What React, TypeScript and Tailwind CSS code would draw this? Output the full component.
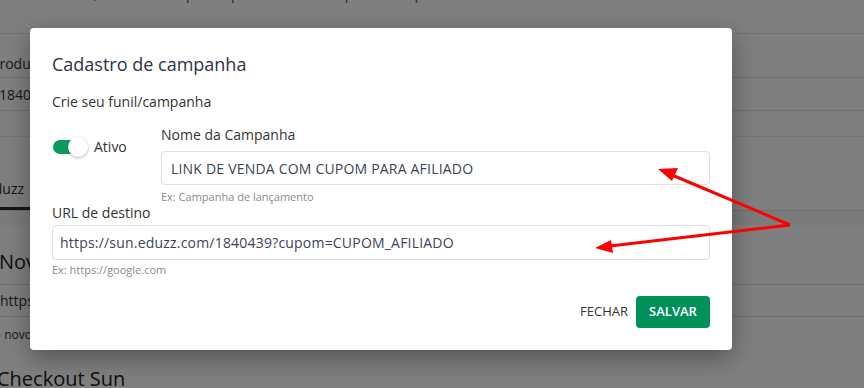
import React from "react";

export default function App() {
  return (
    <div
      className="relative w-[864px] h-[388px] overflow-hidden bg-white text-[#333]"
      style={{ fontFamily: '"Open Sans", "Noto Sans", sans-serif' }}
    >
      {/* background page */}
      <div className="flex flex-col">
        <div className="h-[49px] -mt-[16px] pl-[0px] text-[14px] leading-[20px] text-[#444] whitespace-nowrap">
          e do Checkout, vamos à campanha para vender este produto aqui.
        </div>
        <div className="h-[16px] border-t border-[#e2e2e2]"></div>
        <div className="h-[29px] border-b border-[#ddd] flex items-center -ml-[9px] text-[14px]">Produto</div>
        <div className="h-[33px] border-b border-[#ddd] flex items-center -ml-[1px] text-[14px]">1840439</div>
        <div className="h-[26px] border-b border-[#eaeaea]"></div>
        <div className="h-[74px] flex items-end border-b border-[#ddd]">
          <div className="w-[50px] -ml-[20px] pb-[8px] text-[14px] border-b-[3px] border-[#222a3a] text-center">Eduzz</div>
        </div>
        <div className="h-[14px] bg-[#f6f6f6]"></div>
        <div className="h-[60px] flex items-center pt-[14px] -ml-[1px] text-[20px] text-[#222] border-b border-[#ddd]">Novo link</div>
        <div className="h-[32px] flex items-center text-[14px] border-b border-[#ddd]">https://sun.eduzz.com</div>
        <div className="h-[36px] flex items-center -ml-[6px] text-[12px] text-[#333]">
          <span className="text-[#1a4dcc] mr-[3px]">●</span>novo
        </div>
        <div className="h-[41px] flex items-end -ml-[3px] text-[20px] text-[#222]">Checkout Sun</div>
      </div>

      {/* overlay */}
      <div className="absolute inset-0 bg-black/50"></div>

      {/* modal */}
      <div className="absolute left-[30px] top-[28px] w-[702px] h-[322px] bg-white rounded-[4px] shadow-[0_8px_24px_rgba(0,0,0,0.35)] px-[22px] pt-[24px] flex flex-col">
        <div className="text-[18px] leading-[24px] text-[#2b3445]">Cadastro de campanha</div>
        <div className="mt-[16px] text-[14px] leading-[20px] text-[#333]">Crie seu funil/campanha</div>
        <div className="mt-[13px] flex">
          <div className="w-[109px] flex items-center gap-[6px] pt-[11px] self-start">
            <div className="relative w-[36px] h-[20px] flex items-center">
              <div className="ml-[1px] w-[33px] h-[14px] rounded-full bg-[#0b9a5c]"></div>
              <div className="absolute left-[16px] top-0 w-[20px] h-[20px] rounded-full bg-white shadow-[0_1px_3px_rgba(0,0,0,0.3)]"></div>
            </div>
            <span className="text-[14px] text-[#333]">Ativo</span>
          </div>
          <div className="flex-1 flex flex-col">
            <div className="text-[14px] leading-[20px] text-[#333]">Nome da Campanha</div>
            <div className="mt-[6px] h-[34px] border border-[#dcdfe6] rounded-[4px] flex items-center px-[9px] text-[14px] tracking-[0.2px] text-[#3c4356]">
              LINK DE VENDA COM CUPOM PARA AFILIADO
            </div>
            <div className="mt-[5px] text-[11px] leading-[14px] text-[#8a8a8a]">Ex: Campanha de lançamento</div>
          </div>
        </div>
        <div className="-mt-[1px] text-[14px] leading-[20px] text-[#333]">URL de destino</div>
        <div className="mt-[2px] h-[35px] border border-[#dcdfe6] rounded-[4px] flex items-center px-[7px] text-[14px] tracking-[0.2px] text-[#3c4356]">
          https://sun.eduzz.com/1840439?cupom=CUPOM_AFILIADO
        </div>
        <div className="mt-[3px] text-[11px] leading-[14px] text-[#8a8a8a]">Ex: https://google.com</div>
        <div className="mt-[19px] flex justify-end items-center gap-[8px]">
          <span className="text-[13px] text-[#333]">FECHAR</span>
          <div className="h-[32px] w-[74px] justify-center rounded-[4px] bg-[#00915a] text-white text-[13px] font-semibold flex items-center">
            SALVAR
          </div>
        </div>
      </div>

      {/* red arrows */}
      <svg className="absolute inset-0 pointer-events-none" width="864" height="388" viewBox="0 0 864 388">
        <line x1="790" y1="225" x2="672" y2="175" stroke="#ff0000" strokeWidth="3" />
        <polygon points="658,169 678,168 672,181" fill="#ff0000" />
        <line x1="790" y1="225" x2="610" y2="246" stroke="#ff0000" strokeWidth="3" />
        <polygon points="595,248 611,240 613,253" fill="#ff0000" />
      </svg>
    </div>
  );
}
